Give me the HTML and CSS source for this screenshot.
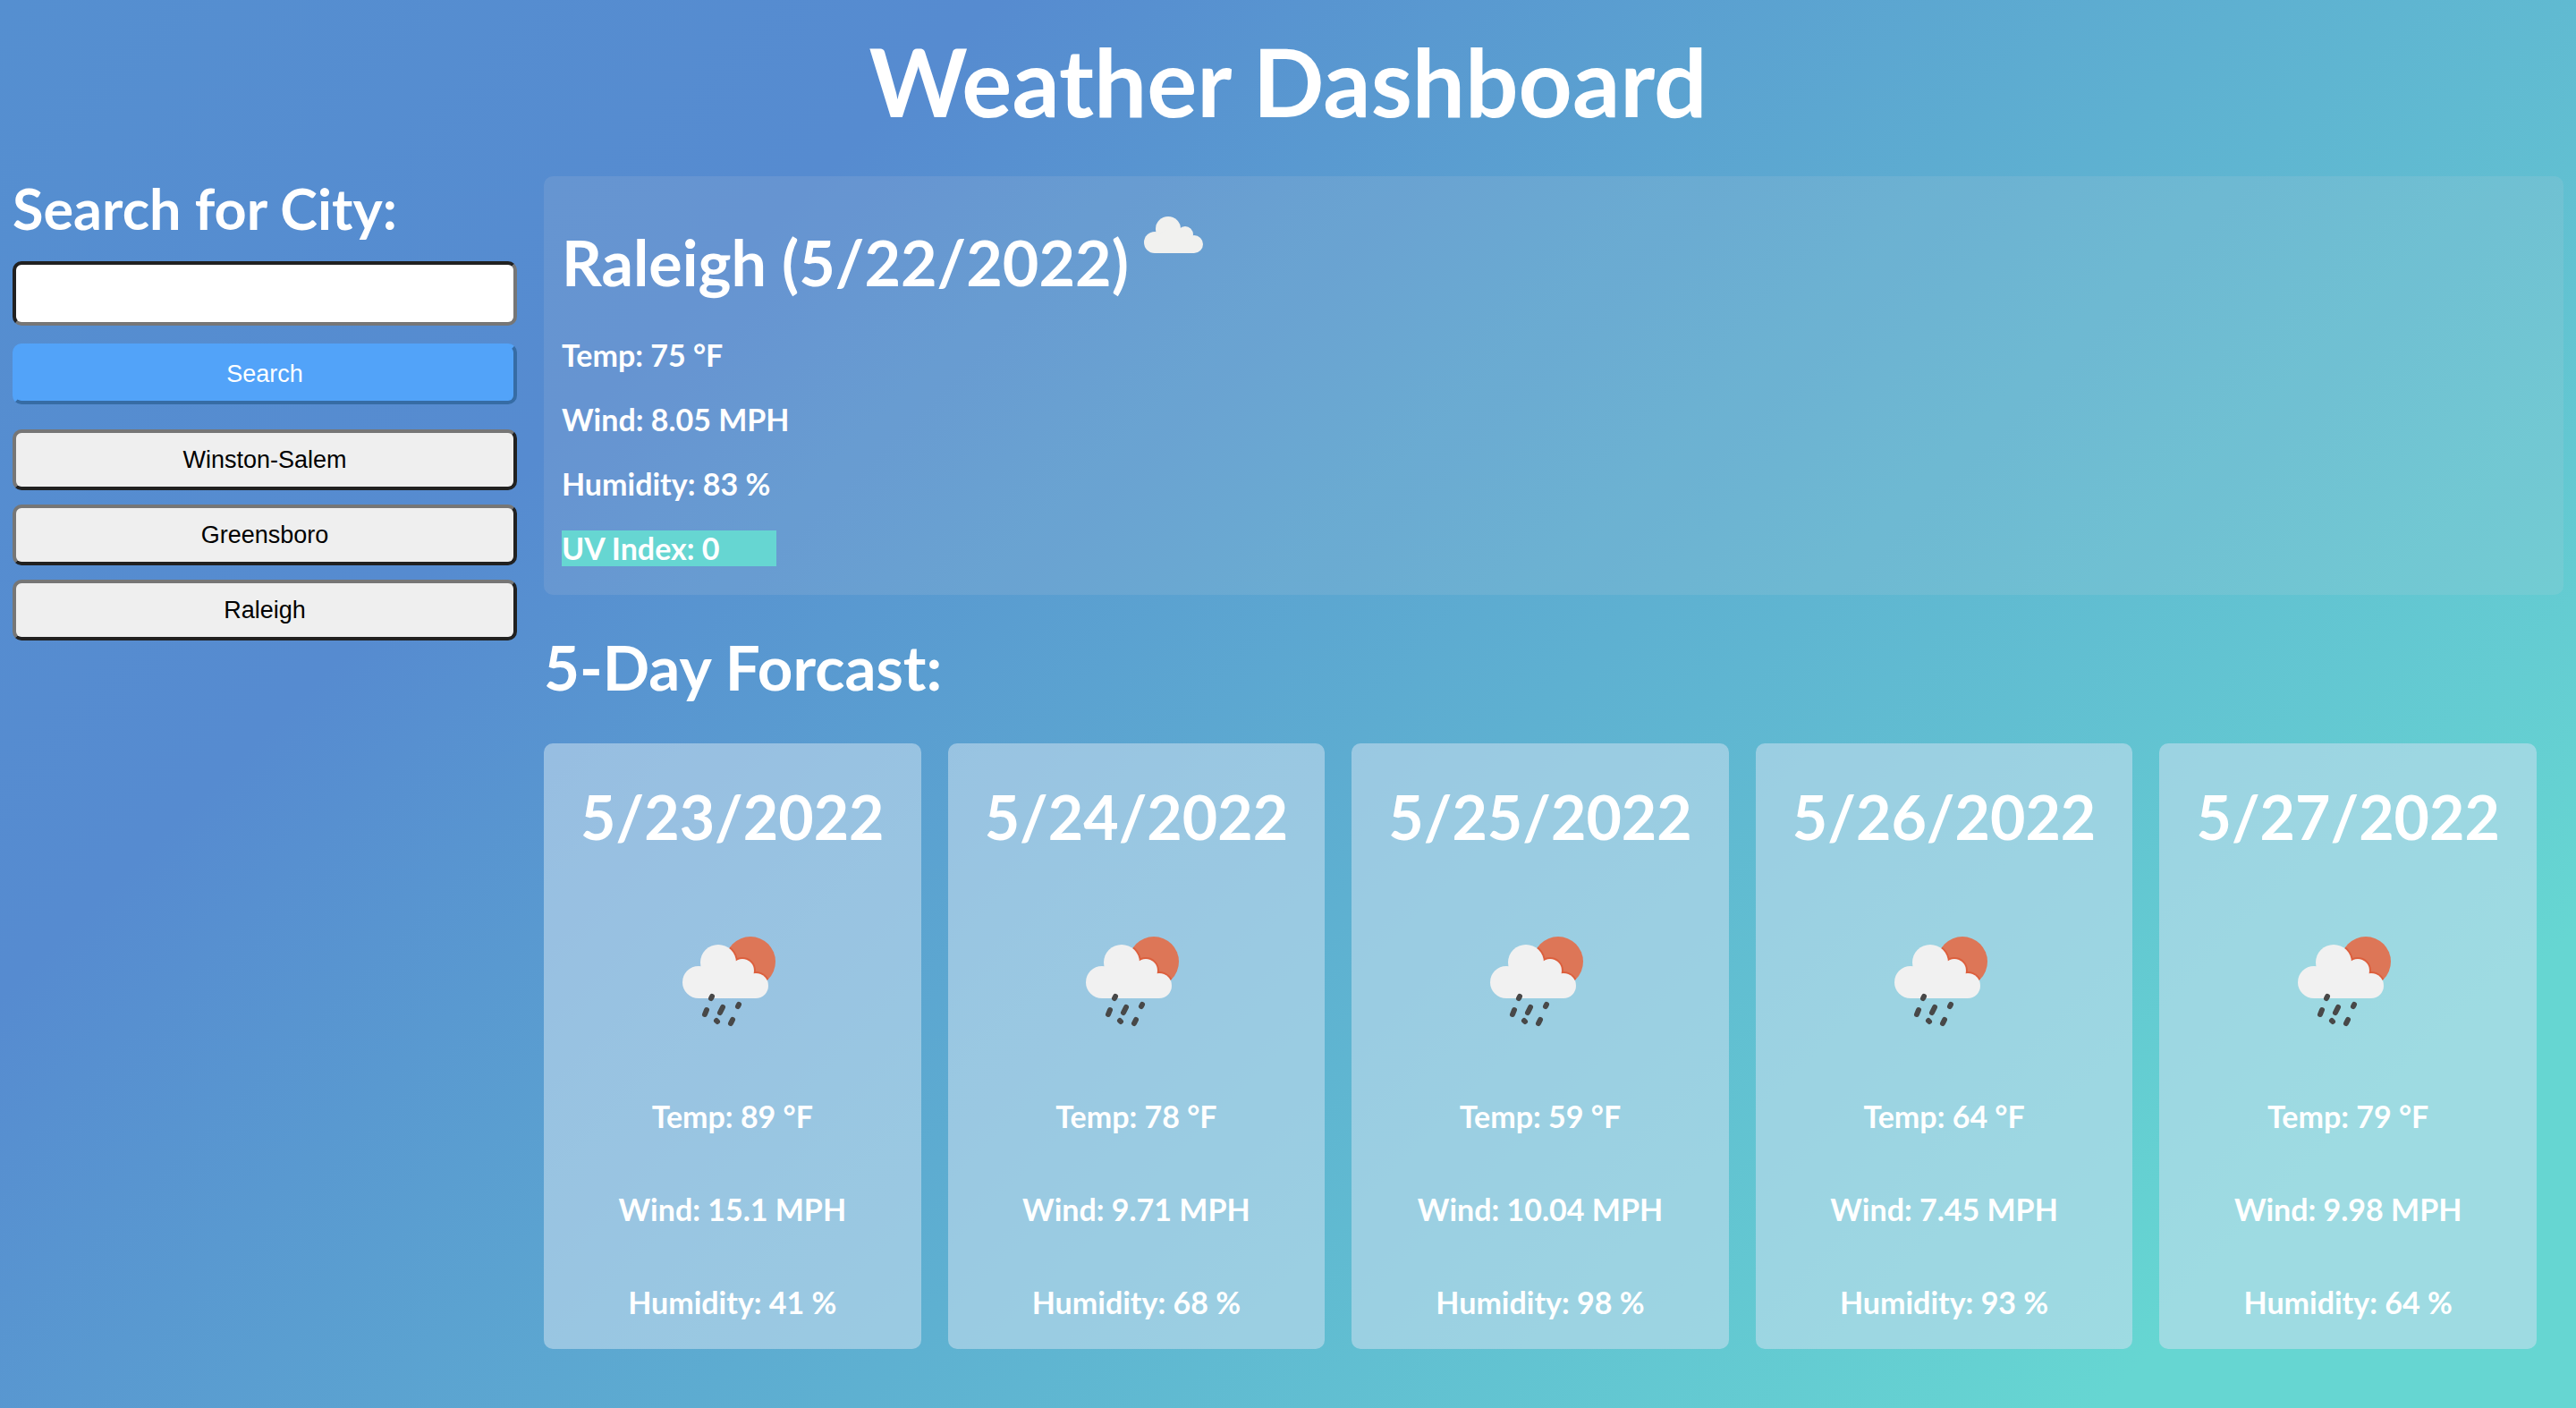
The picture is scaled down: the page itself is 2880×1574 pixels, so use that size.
FILE: index.html
```html
<!DOCTYPE html>
<html lang="en">
<head>
<meta charset="utf-8">
<meta name="viewport" content="width=device-width, initial-scale=1">
<title>Weather Dashboard</title>
<link rel="stylesheet" href="styles.css">
</head>
<body>
<svg class="sprite" aria-hidden="true">
  <symbol id="cloud" viewBox="0 0 66 42">
    <g fill="#f1f1ef">
      <circle cx="12" cy="29" r="12"/><circle cx="27" cy="14" r="14"/><circle cx="46" cy="20" r="9"/><circle cx="56" cy="31" r="10"/>
      <path d="M12 41V22L27 14L46 18L56 30V41Z"/>
    </g>
  </symbol>
  <symbol id="shower" viewBox="0 0 160 150">
    <clipPath id="sun"><circle cx="100" cy="55" r="28"/></clipPath>
    <circle cx="100" cy="55" r="28" fill="#dd7657"/>
    <g clip-path="url(#sun)" fill="#dc5f3d">
      <circle cx="64" cy="56" r="22"/><circle cx="91" cy="65" r="15"/><circle cx="106" cy="82" r="16"/>
    </g>
    <g fill="#f1f1f1">
      <circle cx="42" cy="78" r="18"/><circle cx="64" cy="56" r="20"/><circle cx="91" cy="65" r="13"/><circle cx="106" cy="82" r="14"/>
      <path d="M42 96V66L64 50L91 60L106 76V96Z"/>
    </g>
    <path fill="none" stroke="#484848" stroke-width="6" stroke-linecap="round" d="M57 94L56 96M51 109L49 114M69 106L66 112M87 103L86 105M62 121L63 122M80 120L78 124"/>
  </symbol>
</svg>
<header class="banner"><h1>Weather Dashboard</h1></header>
<main class="layout">
  <aside class="sidebar">
    <form class="search">
      <label class="search-label" for="city">Search for City:</label>
      <input class="city-input" id="city" type="text">
      <button class="btn btn-search" type="button">Search</button>
    </form>
    <div class="history">
      <button class="btn" type="button">Winston-Salem</button>
      <button class="btn" type="button">Greensboro</button>
      <button class="btn" type="button">Raleigh</button>
    </div>
  </aside>
  <div class="content">
    <section class="current">
      <h2 class="place">Raleigh (5/22/2022) <svg class="place-icon"><use href="#cloud"/></svg></h2>
      <p>Temp: 75 °F</p>
      <p>Wind: 8.05 MPH</p>
      <p>Humidity: 83 %</p>
      <p class="uv">UV Index: 0</p>
    </section>
    <h2 class="forecast-title">5-Day Forcast:</h2>
    <section class="forecast">
      <article class="day"><h2>5/23/2022</h2><svg class="day-icon"><use href="#shower"/></svg><p>Temp: 89 °F</p><p>Wind: 15.1 MPH</p><p>Humidity: 41 %</p></article>
      <article class="day"><h2>5/24/2022</h2><svg class="day-icon"><use href="#shower"/></svg><p>Temp: 78 °F</p><p>Wind: 9.71 MPH</p><p>Humidity: 68 %</p></article>
      <article class="day"><h2>5/25/2022</h2><svg class="day-icon"><use href="#shower"/></svg><p>Temp: 59 °F</p><p>Wind: 10.04 MPH</p><p>Humidity: 98 %</p></article>
      <article class="day"><h2>5/26/2022</h2><svg class="day-icon"><use href="#shower"/></svg><p>Temp: 64 °F</p><p>Wind: 7.45 MPH</p><p>Humidity: 93 %</p></article>
      <article class="day"><h2>5/27/2022</h2><svg class="day-icon"><use href="#shower"/></svg><p>Temp: 79 °F</p><p>Wind: 9.98 MPH</p><p>Humidity: 64 %</p></article>
    </section>
  </div>
</main>
</body>
</html>
```
FILE: styles.css
```css
* { box-sizing: border-box; }
body {
  margin: 0;
  min-height: 100vh;
  color: #fff;
  font-family: Lato, "Open Sans", sans-serif;
  font-weight: 700;
  background: linear-gradient(135deg, #558fd0 0%, #568bd0 25%, #66d6d2 88%);
}
h1, h2, p { margin: 0; font-weight: 700; }
.sprite { display: block; width: 0; height: 0; }
.banner { padding: 26px 14px 43px; text-align: center; }
.banner h1 { font-size: 105px; line-height: 128px; }
.layout { display: flex; gap: 30px; padding: 0 14px; }
.sidebar { flex: 0 0 564px; min-width: 0; }
.search { display: flex; flex-direction: column; }
.search-label { font-size: 63px; line-height: 72px; margin-bottom: 23px; }
.city-input {
  height: 72px;
  padding: 0 16px;
  border: 4px inset #767676;
  border-radius: 10px;
  background: #fff;
  font: 27px "Liberation Sans", sans-serif;
}
.btn {
  height: 68px;
  border: 4px outset #767676;
  border-radius: 10px;
  background: #efefef;
  color: #000;
  font: 27px "Liberation Sans", sans-serif;
}
.btn-search { margin-top: 20px; border-color: #52a3f9; background: #52a3f9; color: #fff; }
.history { display: flex; flex-direction: column; gap: 16px; margin-top: 28px; }
.content { flex: 1; min-width: 0; }
.current {
  padding: 44px 20px 32px;
  border-radius: 10px;
  background: rgba(220, 215, 225, .12);
  font-size: 34px;
  line-height: 40px;
}
.place { margin-bottom: 32px; font-size: 70px; line-height: 104px; }
.place-icon { width: 66px; height: 42px; vertical-align: 36px; }
.current p + p { margin-top: 32px; }
.current .uv { width: 240px; background: #66d6d2; }
.forecast-title { margin: 33px 0 37px; font-size: 69px; line-height: 96px; }
.forecast { display: flex; gap: 30px; padding-right: 30px; }
.day {
  flex: 1;
  display: flex;
  flex-direction: column;
  align-items: center;
  padding: 32px 0;
  border-radius: 10px;
  background: rgba(202, 223, 239, .56);
  font-size: 34px;
  line-height: 40px;
}
.day h2 { font-size: 68px; line-height: 100px; }
.day-icon { width: 160px; height: 150px; margin: 57px 0 58px; }
.day p + p { margin-top: 64px; }
```
